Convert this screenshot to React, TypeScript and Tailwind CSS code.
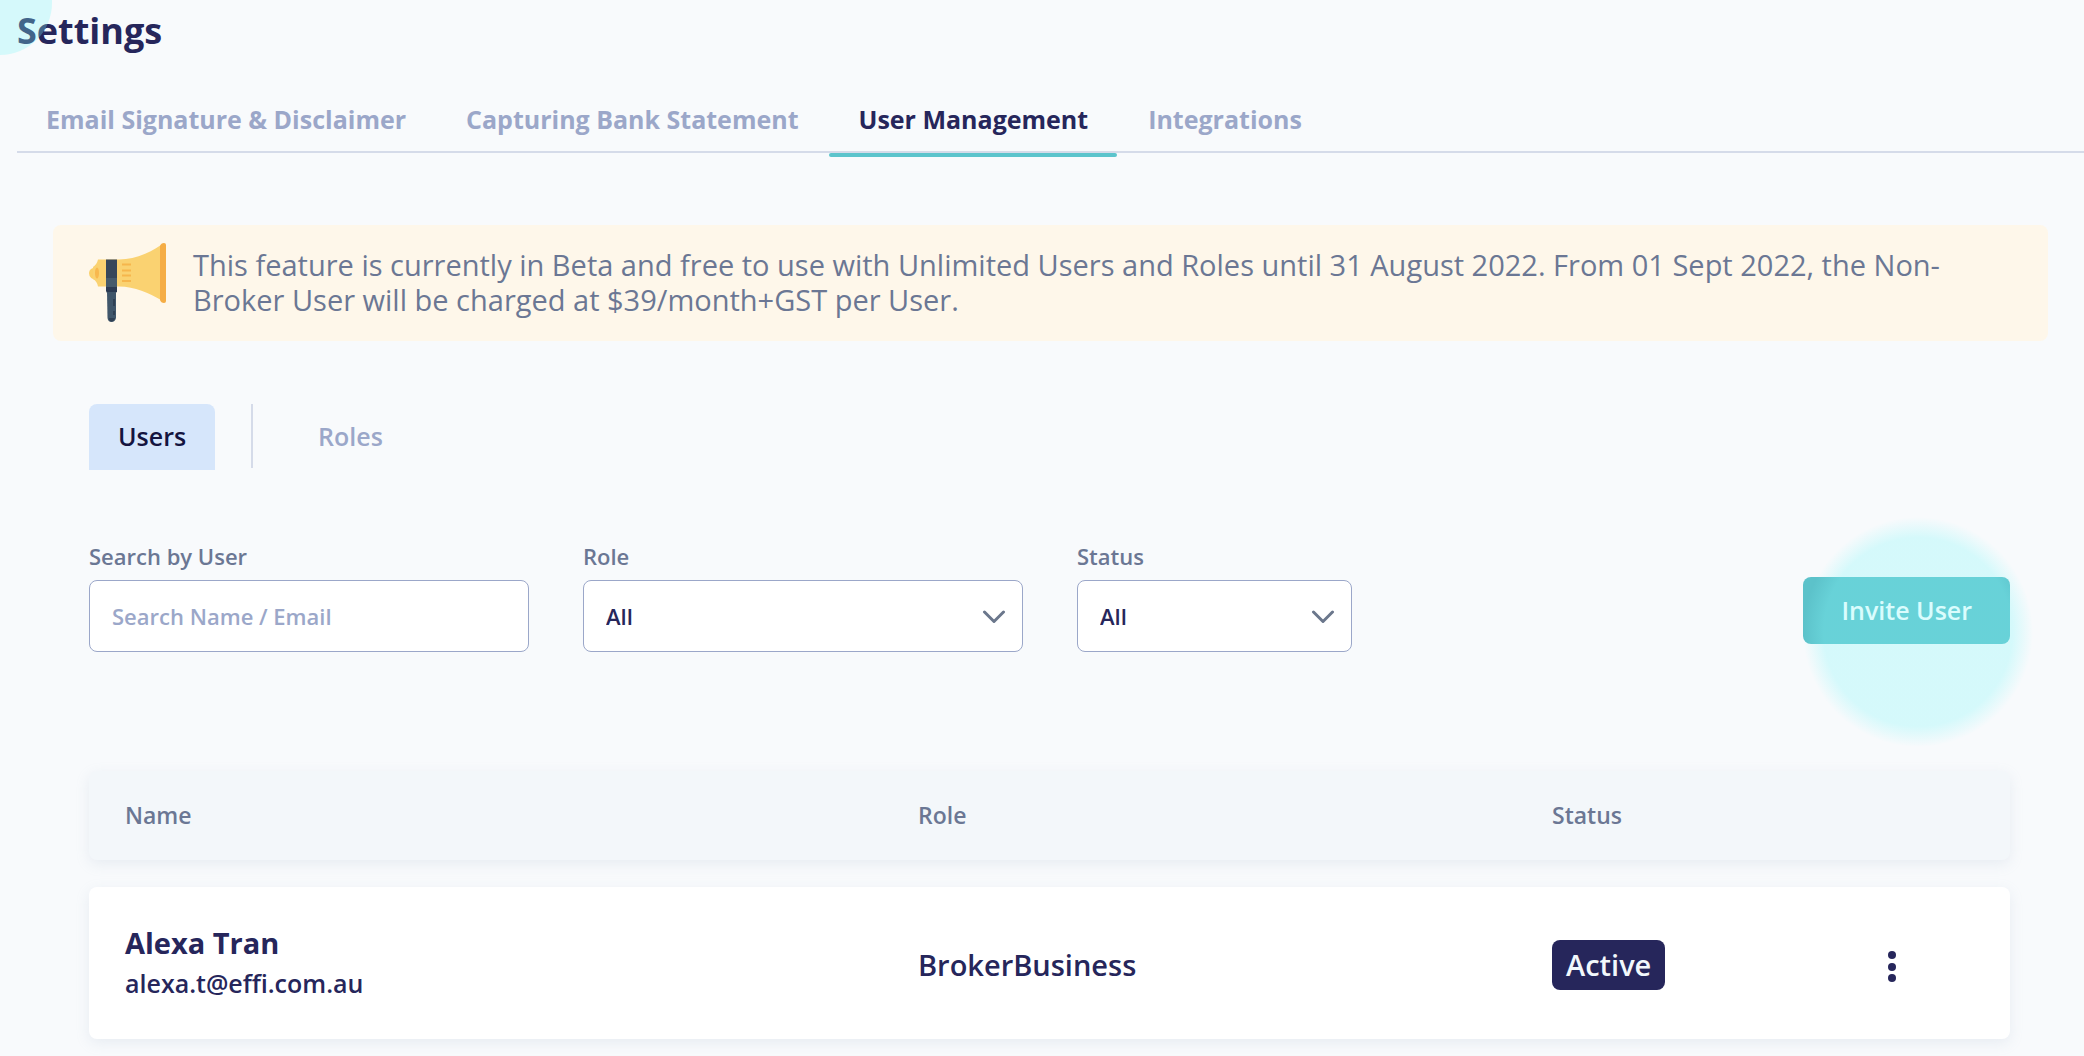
import type { ReactNode } from "react";

const tabs = [
  "Email Signature & Disclaimer",
  "Capturing Bank Statement",
  "User Management",
  "Integrations",
];

const users = [
  { name: "Alexa Tran", email: "alexa.t@effi.com.au", role: "BrokerBusiness", status: "Active" },
];

function Megaphone() {
  return (
    <svg viewBox="0 0 78 80" className="h-20 w-[78px] shrink-0" aria-hidden="true">
      <path d="M8 24Q0 25 0 30Q0 36 8 37Z" fill="#fad06a" />
      <path d="M9 16.500H30C46 16.500 60 10 72 2V57C60 50 46 43.500 30 43.500H9Q8 38 4 36V24Q8 21 9 16.500Z" fill="#fad271" />
      <ellipse cx="8" cy="30" rx="2" ry="5.500" fill="#f8b84e" />
      <path d="M33 21.500H42M33 27.500H42M33 32.500H42M33 38H42" stroke="#f6b64c" strokeWidth="2.200" />
      <path d="M71 3Q72 0 75 0Q77 0 77 2V58Q77 60 75 60Q72 60 71 57Z" fill="#f5ad45" />
      <path d="M17 16.500H28V48H17Z" fill="#36475a" />
      <path d="M17 35H28V44H17Z" fill="#455a6b" />
      <path d="M17 44H28V49L26 50H18L17 48Z" fill="#2b3a52" />
      <path d="M18 49H27V75Q26 79 22.500 79Q19 79 18.500 75Z" fill="#40566a" />
      <path d="M25 56V63M25 68V72" stroke="#2f4054" strokeWidth="2" />
      <path d="M20 75H26Q25 78.500 22.500 78.500Q20 78.500 20 75Z" fill="#2f4054" />
    </svg>
  );
}

function Field({ id, label, className, children }: { id: string; label: string; className: string; children: ReactNode }) {
  return (
    <div className={className}>
      <label htmlFor={id} className="mb-2 block text-[22px] leading-8 font-semibold text-[#6b7794]">
        {label}
      </label>
      {children}
    </div>
  );
}

function Select({ id }: { id: string }) {
  return (
    <div className="relative">
      <select
        id={id}
        className="h-[72px] w-full appearance-none rounded-lg border border-[#9ba7c9] bg-white px-[22px] text-[22px] font-semibold text-[#26265b]"
      >
        <option>All</option>
      </select>
      <svg
        viewBox="0 0 24 14"
        className="pointer-events-none absolute top-[30px] right-[17px] h-3.5 w-6"
        fill="none"
        stroke="#6b778c"
        strokeWidth="3"
        strokeLinecap="round"
        strokeLinejoin="round"
        aria-hidden="true"
      >
        <path d="M2.500 2L12 11.500L21.500 2" />
      </svg>
    </div>
  );
}

export default function App() {
  return (
    <div className="relative min-h-screen overflow-hidden bg-[#f8fafc] pl-[17px] font-['Open_Sans',sans-serif] text-[#26265b]">
      <div className="pointer-events-none absolute top-0 left-0 z-10 h-[55px] w-[52px] rounded-br-full bg-[#83f7f9]/30" />

      <h1 className="pt-1.5 text-4xl leading-[50px] font-bold">Settings</h1>

      <nav className="mt-8 flex gap-0.5 border-b-2 border-[#d5dbe9]">
        {tabs.map((tab) => {
          const active = tab === "User Management";
          return (
            <a
              key={tab}
              href="#"
              aria-current={active ? "page" : undefined}
              className={
                active
                  ? "relative px-[29px] pt-[13px] pb-3.5 text-[25px] leading-9 font-bold text-[#26265b] after:absolute after:inset-x-0 after:-bottom-1.5 after:h-1 after:rounded-sm after:bg-[#5cc4cc]"
                  : "px-[29px] pt-[13px] pb-3.5 text-[25px] leading-9 font-bold text-[#9ba7c9]"
              }
            >
              {tab}
            </a>
          );
        })}
      </nav>

      <main className="px-9 pt-[72px]">
        <section className="flex items-center gap-[26px] rounded-lg bg-[#fef7ea] px-9 py-[18px]">
          <Megaphone />
          <p className="pb-0.5 text-[29px] leading-[35px] text-[#6b7794]">
            This feature is currently in Beta and free to use with Unlimited Users and Roles until 31 August 2022.
            From 01 Sept 2022, the Non-Broker User will be charged at $39/month+GST per User.
          </p>
        </section>

        <div className="pr-[38px] pl-9">
          <div className="mt-[63px] flex items-start">
            <button className="rounded-t-lg bg-[#d6e6fb] px-[29px] pt-3.5 pb-4 text-[25px] leading-9 font-semibold text-[#14143f]">
              Users
            </button>
            <div className="mx-9 h-16 w-0.5 bg-[#d5dbe9]" />
            <button className="px-[29px] pt-3.5 pb-4 text-[25px] leading-9 font-semibold text-[#9ba7c9]">Roles</button>
          </div>

          <div className="mt-[70px] flex items-end">
            <Field id="search" label="Search by User" className="mr-[54px] w-[440px]">
              <input
                id="search"
                type="text"
                placeholder="Search Name / Email"
                className="h-[72px] w-full rounded-lg border border-[#9ba7c9] bg-white px-[22px] text-[22px] font-semibold placeholder:text-[#9ba7c9]"
              />
            </Field>
            <Field id="role" label="Role" className="mr-[54px] w-[440px]">
              <Select id="role" />
            </Field>
            <Field id="status" label="Status" className="w-[275px]">
              <Select id="status" />
            </Field>
            <div className="relative mb-2 ml-auto">
              <button className="rounded-lg bg-[#5cc2ca] px-[38px] py-4 text-[25px] leading-[35px] font-semibold text-white">
                Invite User
              </button>
              <div className="pointer-events-none absolute top-[-60px] left-0 size-[230px] rounded-full bg-[radial-gradient(circle_closest-side,rgba(131,247,249,0.3)_82%,rgba(131,247,249,0)_100%)]" />
            </div>
          </div>

          <table className="mt-[119px] block w-full text-left">
            <thead className="block">
              <tr className="grid grid-cols-[793fr_634fr_336fr_122fr] items-center rounded-lg bg-[#f3f7fa] py-7 pl-9 text-[23px] leading-[33px] text-[#6b7794] shadow-[0_4px_14px_rgba(150,170,195,0.16)]">
                <th className="font-semibold">Name</th>
                <th className="font-semibold">Role</th>
                <th className="font-semibold">Status</th>
                <th aria-label="Actions" />
              </tr>
            </thead>
            <tbody className="mt-[27px] block">
              {users.map((user) => (
                <tr
                  key={user.email}
                  className="grid grid-cols-[793fr_634fr_336fr_122fr] items-center rounded-lg bg-white py-9 pl-9 shadow-[0_4px_14px_rgba(150,170,195,0.16)]"
                >
                  <td>
                    <div className="text-[29px] leading-10 font-bold">{user.name}</div>
                    <div className="text-[25px] leading-10 font-semibold">{user.email}</div>
                  </td>
                  <td className="pt-1 text-[29px] font-semibold">{user.role}</td>
                  <td className="pt-1 text-[29px]">
                    <span className="inline-block rounded-lg bg-[#26265b] px-3.5 py-1.5 leading-[38px] font-semibold text-[#f2f8fc]">
                      {user.status}
                    </span>
                  </td>
                  <td className="pt-2">
                    <button aria-label="User actions" className="block">
                      <svg viewBox="0 0 8 32" className="h-8 w-2" fill="#26265b" aria-hidden="true">
                        <circle cx="4" cy="4" r="4" />
                        <circle cx="4" cy="16" r="4" />
                        <circle cx="4" cy="27" r="4" />
                      </svg>
                    </button>
                  </td>
                </tr>
              ))}
            </tbody>
          </table>
        </div>
      </main>
    </div>
  );
}
